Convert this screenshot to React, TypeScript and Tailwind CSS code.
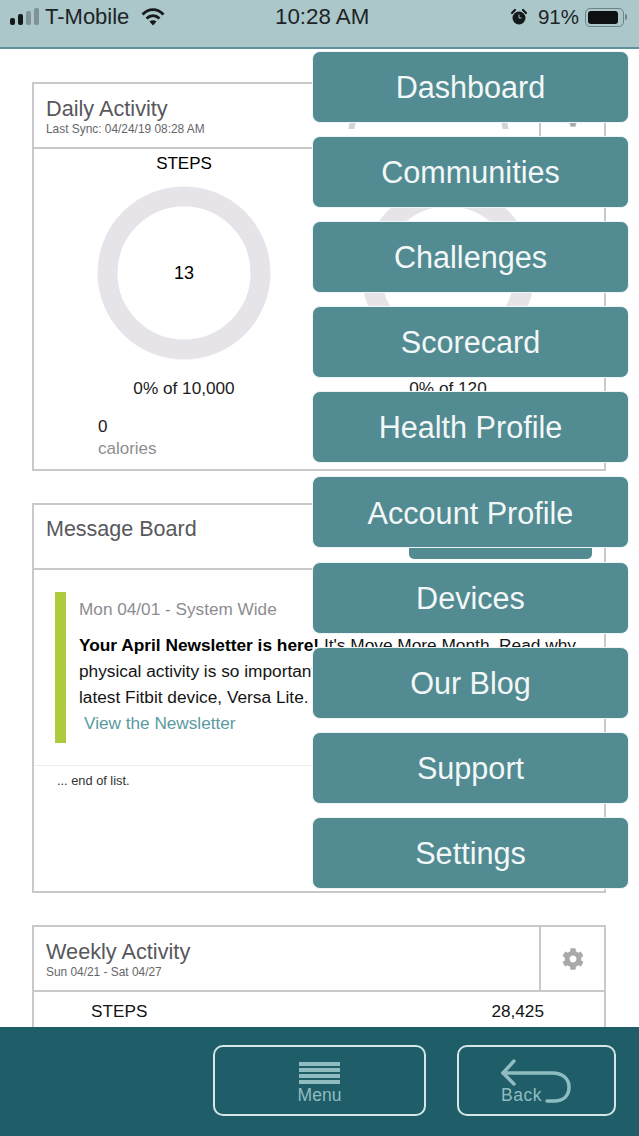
import { FaCog } from "react-icons/fa";

const menuItems = ["Dashboard", "Communities", "Challenges", "Scorecard", "Health Profile", "Account Profile", "Devices", "Our Blog", "Support", "Settings"];

function StatusBar() {
  return (
    <div className="relative flex h-[49px] shrink-0 items-start justify-between border-b-2 border-[#5f939b] bg-[#abc7ca] pl-[10px] pr-[12px] pt-[5px] text-[22px] leading-[24px] text-[#1c2426]">
      <div className="flex items-center">
        <svg width="29" height="20" viewBox="0 0 29 20" className="mr-[6px]">
          <rect x="0" y="11" width="5" height="7" rx="2" fill="#14191b" />
          <rect x="8" y="7" width="5" height="11" rx="2" fill="#14191b" />
          <rect x="16" y="4" width="5" height="14" rx="2" fill="#7e9396" />
          <rect x="24" y="1" width="5" height="17" rx="2" fill="#7e9396" />
        </svg>
        <span className="mr-[12px]">T-Mobile</span>
        <svg width="24" height="20" viewBox="0 0 24 20" fill="none" stroke="#14191b" strokeWidth="2.800">
          <path d="M1.500 7.500 C8 1 16 1 22.500 7.500" />
          <path d="M5.500 11.500 C9.500 7.800 14.500 7.800 18.500 11.500" />
          <path d="M12 18.500 L8.500 14.500 C10.500 12.800 13.500 12.800 15.500 14.500 Z" fill="#14191b" stroke="none" />
        </svg>
      </div>
      <span className="absolute left-[275px] top-[5px] text-[22.300px] font-medium">10:28 AM</span>
      <div className="flex items-center">
        <svg width="18" height="18" viewBox="0 0 18 18" className="mr-[10px]">
          <circle cx="9" cy="10" r="6.500" fill="#14191b" />
          <path d="M2 5 L5 2 M16 5 L13 2" stroke="#14191b" strokeWidth="2.200" strokeLinecap="round" />
          <path d="M9 6.500 V10 H11.500" stroke="#abc7ca" strokeWidth="1" fill="none" />
        </svg>
        <span className="mr-[6px] text-[20.500px]">91%</span>
        <div className="flex items-center">
          <div className="flex h-[19px] w-[39px] items-center rounded-[5px] border border-[#6f8386] p-[2px]">
            <div className="h-full w-[90%] rounded-[3px] bg-[#0d1112]" />
          </div>
          <div className="ml-[1px] h-[6px] w-[2px] rounded-r-sm bg-[#6f8386]" />
        </div>
      </div>
    </div>
  );
}

function Ring() {
  return (
    <svg width="174" height="174" viewBox="0 0 174 174" className="block">
      <circle cx="87" cy="87" r="76.500" fill="none" stroke="#e6e4e8" strokeWidth="20" />
    </svg>
  );
}

function CardHeader({ title, sub }: { title: string; sub?: string }) {
  return (
    <div className="flex h-[65px] shrink-0 border-b-2 border-[#c9c9cc]">
      <div className="flex flex-1 flex-col justify-center pl-[12px]">
        <div className="text-[21.700px] leading-[26px] text-[#58585c]">{title}</div>
        {sub && <div className="text-[11.900px] leading-[14px] text-[#66666a]">{sub}</div>}
      </div>
      <div className="flex w-[65px] items-center justify-center border-l-2 border-[#c9c9cc]">
        <FaCog className="text-[22px] text-[#a9a9ab]" />
      </div>
    </div>
  );
}

function ActivityColumn({ label, total, stat, statLabel }: { label: string; total: string; stat: string; statLabel: string }) {
  return (
    <div className="flex w-[264px] flex-col items-center">
      <div className="mt-[5px] text-[17px] leading-[20px] text-black">{label}</div>
      <div className="relative mt-[12px]">
        <Ring />
        <span className="absolute inset-0 flex items-center justify-center text-[18px] text-black">{stat}</span>
      </div>
      <div className="mt-[18px] text-[17.200px] leading-[20px] text-[#1c1c1c]">{total}</div>
      <div className="mt-[18px] w-full pl-[46px]">
        <div className="text-[17px] leading-[22px] text-[#1c1c1c]">0</div>
        <div className="text-[17px] leading-[22px] text-[#8d8d91]">{statLabel}</div>
      </div>
    </div>
  );
}

export default function App() {
  return (
    <div className="relative flex h-[1136px] w-[639px] flex-col overflow-hidden bg-white font-['Liberation_Sans',Arial,sans-serif]">
      <StatusBar />

      <div className="flex min-h-0 flex-1 flex-col gap-[32px] overflow-hidden pl-[32px] pr-[33px] pt-[33px]">
        <section className="relative flex h-[389px] shrink-0 flex-col border-2 border-[#c9c9cc]">
          <CardHeader title="Daily Activity" sub="Last Sync: 04/24/19 08:28 AM" />
          <span className="absolute left-[315px] top-[39px] h-[6px] w-[6px] -skew-x-12 bg-[#d4d4d6]" />
          <span className="absolute left-[468px] top-[39px] h-[6px] w-[6px] skew-x-12 bg-[#d4d4d6]" />
          <div className="flex pl-[18px]">
            <ActivityColumn label="STEPS" total="0% of 10,000" stat="13" statLabel="calories" />
            <ActivityColumn label="MINUTES" total="0% of 120" stat="0" statLabel="miles" />
          </div>
        </section>

        <section className="flex h-[390px] shrink-0 flex-col border-2 border-[#c9c9cc]">
          <div className="flex h-[65px] shrink-0 items-center justify-between border-b-2 border-[#c9c9cc] pl-[12px] pr-[12px]">
            <div className="mb-[15px] text-[21.500px] text-[#58585c]">Message Board</div>
            <div className="mb-[5px] h-[50px] w-[183px] rounded-[5px] bg-[#528b92]" />
          </div>
          <div className="ml-[21px] mr-[24px] mt-[22px] flex h-[151px] gap-[13px]">
            <div className="w-[11px] shrink-0 bg-[#aecb3f]" />
            <div className="whitespace-nowrap pt-[5px]">
              <div className="text-[17.200px] leading-[24px] text-[#8d8d91]">Mon 04/01 - System Wide</div>
              <p className="mt-[11px] text-[17.300px] leading-[26px] text-[#141414]">
                <b className="text-black">Your April Newsletter is here!</b> It's Move More Month. Read why
                <br />
                physical activity is so important and check out the
                <br />
                latest Fitbit device, Versa Lite.
              </p>
              <a className="ml-[5px] block text-[17.200px] leading-[26px] text-[#5b9a9f]">View the Newsletter</a>
            </div>
          </div>
          <div className="mt-[22px] border-t border-[#ececec] pl-[23px] pt-[7px] text-[12.800px] leading-[16px] text-[#333333]">... end of list.</div>
        </section>

        <section className="flex shrink-0 flex-col border-2 border-b-0 border-[#c9c9cc]">
          <CardHeader title="Weekly Activity" sub="Sun 04/21 - Sat 04/27" />
          <div className="flex h-[60px] justify-between pl-[57px] pr-[60px] pt-[9px] text-[17.200px] leading-[20px] text-[#141414]">
            <span>STEPS</span>
            <span>28,425</span>
          </div>
        </section>
      </div>

      <div className="z-10 flex h-[109px] shrink-0 items-start justify-end gap-[31px] bg-[#1f5d68] pr-[23px] pt-[18px]">
        <button className="flex h-[71px] w-[213px] flex-col items-center justify-start rounded-[10px] border-2 border-[#d3e6e8] pt-[15px] text-[17.500px] leading-[18px] text-[#8fbcc0]">
          <span className="flex w-[41px] flex-col gap-[2.500px]">
            <span className="h-[3.500px] bg-[#8fbcc0]" />
            <span className="h-[3.500px] bg-[#8fbcc0]" />
            <span className="h-[3.500px] bg-[#8fbcc0]" />
            <span className="h-[3.500px] bg-[#8fbcc0]" />
          </span>
          <span className="mt-[2px]">Menu</span>
        </button>
        <button className="relative h-[71px] w-[159px] rounded-[10px] border-2 border-[#d3e6e8] text-[17.500px] text-[#8fbcc0]">
          <svg width="72" height="56" viewBox="0 0 72 56" fill="none" stroke="#8fbcc0" strokeWidth="3.500" strokeLinecap="round" strokeLinejoin="round" className="absolute left-[41px] top-[11px]">
            <path d="M14 3 L3 15 L14 26" />
            <path d="M3 15 H52 C63 15 69 21 69 29 C69 38 63 43 54 43 H47" />
          </svg>
          <span className="absolute left-[42px] top-[39px] leading-[18px] tracking-[0.5px]">Back</span>
        </button>
      </div>

      <nav className="absolute left-[312px] top-[51px] z-20 flex w-[317px] flex-col gap-[13.100px]">
        {menuItems.map((item) => (
          <a key={item} className="flex h-[72px] items-center justify-center rounded-[8px] border border-[#eef5f6] bg-[#528b92] pt-[2px] text-[30.600px] text-[#f2f7f7]">
            {item}
          </a>
        ))}
      </nav>
    </div>
  );
}
